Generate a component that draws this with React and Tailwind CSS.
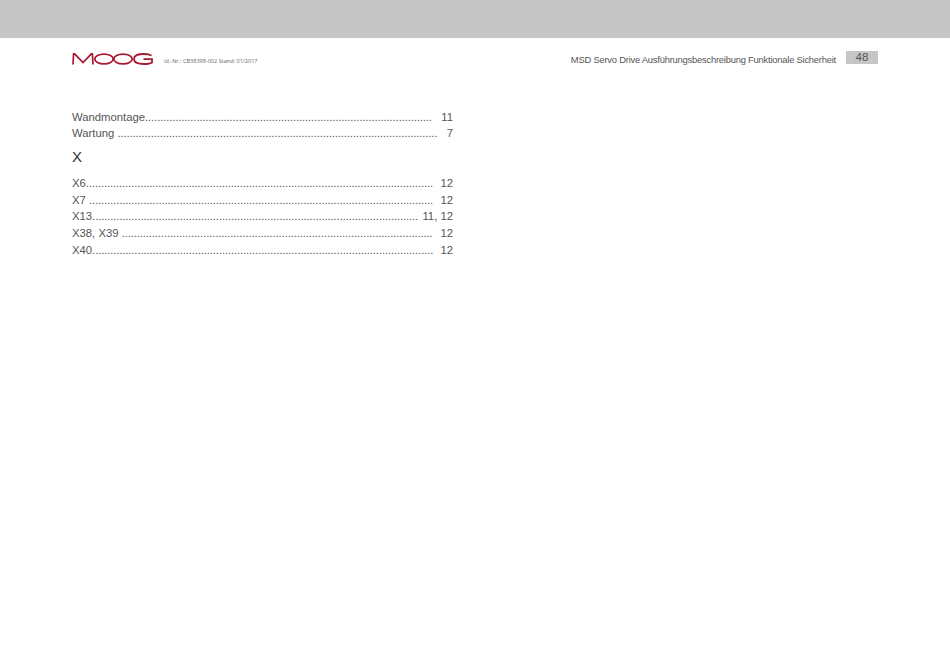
function IndexRow({ label, page, dotCount }) {
  return (
    <div className="flex h-[16.7px] items-center justify-between leading-[16.7px] whitespace-nowrap">
      <span className="flex">
        <span className="whitespace-pre">{label}</span>
        <span className="tracking-[-0.12px]">{".".repeat(dotCount)}</span>
      </span>
      <span>{page}</span>
    </div>
  );
}

function MoogLogo() {
  return (
    <svg width="81" height="12" viewBox="0 0 81 12" fill="none" stroke="#a6192e" className="shrink-0">
      <path d="M1 11.5 L1.6 0.8 L2.6 0.8 L11 9.5 L19.4 0.8 L20.4 0.8 L21 11.5" strokeWidth="1.7" />
      <ellipse cx="32" cy="6" rx="9.2" ry="4.9" strokeWidth="1.8" />
      <ellipse cx="51" cy="6" rx="9.2" ry="4.9" strokeWidth="1.8" />
      <path d="M79.5 2.6 C77.5 1.4 75 1 72 1 C66 1 62 3 62 6 C62 9 66 11 72 11 C75.5 11 78.5 10.4 80 9.4 L80 6.2 L71.5 6.2" strokeWidth="1.8" />
    </svg>
  );
}

export default function App() {
  return (
    <div className="h-[672px] w-[950px] overflow-hidden bg-white font-['Liberation_Sans',Arial,sans-serif] text-[#555555]">
      <div className="h-[38px] bg-[#c6c6c6]" />

      <header className="flex h-[40px] items-start px-[72px]">
        <div className="mt-[15px] flex items-start">
          <MoogLogo />
          <span className="mt-[2px] ml-[11px] font-['Open_Sans',sans-serif] text-[5.55px] leading-[12px] text-[#666666]">
            Id.-Nr.: CB38398-002 Stand: 01/2017
          </span>
        </div>
        <div className="ml-auto flex items-start">
          <span className="mt-[15px] text-[9.4px] leading-[14px] tracking-[-0.22px]">
            MSD Servo Drive Ausführungsbeschreibung Funktionale Sicherheit
          </span>
          <span className="mt-[13px] ml-[10px] h-[13px] w-[32px] bg-[#c6c6c6] text-center text-[11.5px] leading-[13px]">
            48
          </span>
        </div>
      </header>

      <main className="mt-[30.8px] ml-[72px] w-[381px] text-[11.3px]">
        <IndexRow label="Wandmontage" page="11" dotCount={95} />
        <IndexRow label="Wartung " page="7" dotCount={106} />
        <h2 className="mt-[5px] mb-[7.7px] h-[20px] text-[15px] leading-[20px] text-[#333333]">X</h2>
        <IndexRow label="X6" page="12" dotCount={115} />
        <IndexRow label="X7 " page="12" dotCount={114} />
        <IndexRow label="X13" page="11, 12" dotCount={108} />
        <IndexRow label="X38, X39 " page="12" dotCount={103} />
        <IndexRow label="X40" page="12" dotCount={113} />
      </main>
    </div>
  );
}
